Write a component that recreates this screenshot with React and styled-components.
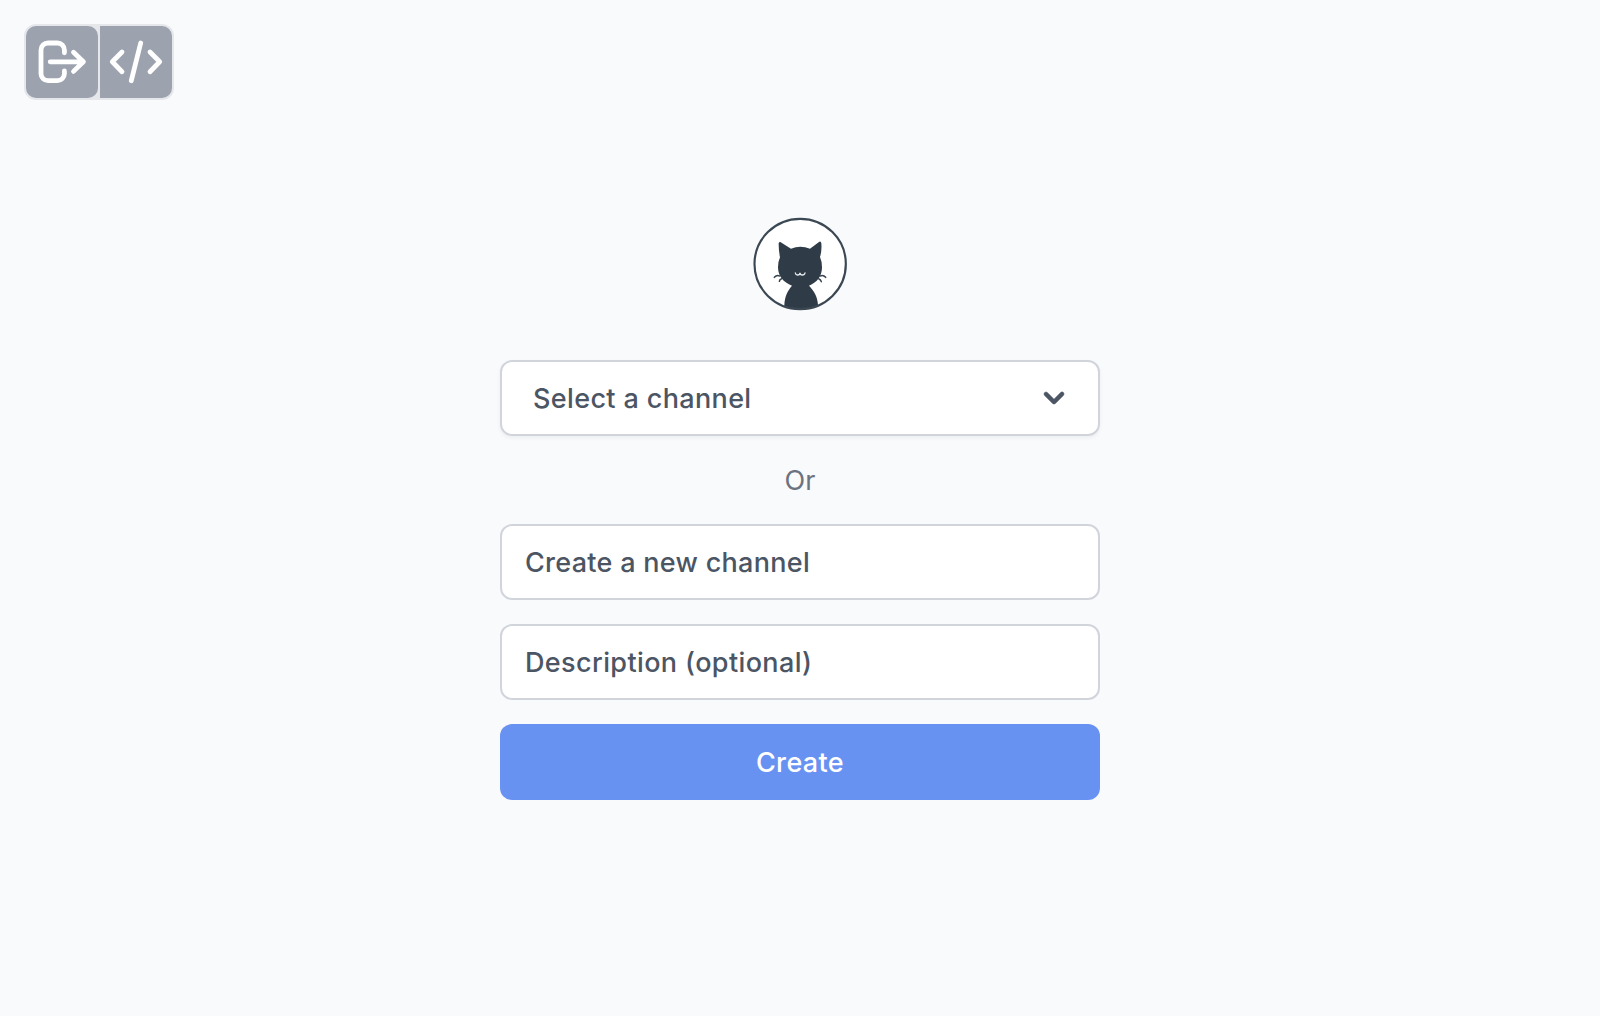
import React from "react";
import styled, { createGlobalStyle } from "styled-components";

const GlobalStyle = createGlobalStyle`
  *, *::before, *::after { box-sizing: border-box; }
  body { margin: 0; background: #f9fafc; font-family: Inter, "Liberation Sans", sans-serif; }
  button, input { font: inherit; letter-spacing: inherit; margin: 0; }
`;

const Page = styled.div`
  display: grid;
  grid-template-rows: 1fr auto 1fr;
  height: 100vh;
  overflow: hidden;
`;

const Toolbar = styled.nav`
  display: flex;
  align-self: start;
  justify-self: start;
  margin: 24px;
  border: 2px solid #e5e7eb;
  border-radius: 12px;
  background: #e5e7eb;
  gap: 2px;
`;

const ToolButton = styled.button`
  display: flex;
  width: 72px;
  height: 72px;
  padding: 0;
  border: 0;
  border-radius: ${(p) => p.$radius};
  background: #9ca3af;
  color: #fff;
`;

const ToolIcon = styled.svg`
  width: 72px;
  height: 72px;
  fill: none;
  stroke: currentColor;
  stroke-width: 4.8;
  stroke-linecap: round;
  stroke-linejoin: round;
`;

const Form = styled.form`
  grid-row: 2;
  justify-self: center;
  display: flex;
  flex-direction: column;
  gap: 24px;
  width: 600px;
  font-size: 27px;
  line-height: 40px;
`;

const Logo = styled.svg`
  align-self: center;
  width: 96px;
  height: 96px;
  margin-bottom: 24px;
`;

const Select = styled.button`
  display: flex;
  align-items: center;
  justify-content: space-between;
  height: 76px;
  padding: 0 24px 0 31px;
  border: 2px solid #d1d5db;
  border-radius: 12px;
  background: #fff;
  box-shadow: 0 2px 4px rgba(0, 0, 0, 0.05);
  color: #4b5563;
  font-weight: 500;
`;

const Label = styled.span`
  padding-top: 1px;
  letter-spacing: ${(p) => p.$spacing};
`;

const Chevron = styled.svg`
  width: 40px;
  height: 40px;
  fill: currentColor;
  stroke: currentColor;
  stroke-width: 0.25;
`;

const Divider = styled.div`
  height: 40px;
  padding-top: 1px;
  color: #6b7280;
  text-align: center;
  letter-spacing: 0.2px;
`;

const Field = styled.input`
  width: 100%;
  height: 76px;
  padding: 1px 24px 0 23px;
  border: 2px solid #d1d5db;
  border-radius: 12px;
  background: #fff;
  color: #4b5563;
  font-weight: 500;
  letter-spacing: ${(p) => p.$spacing};
  outline: none;

  &::placeholder {
    color: #4b5563;
    opacity: 1;
  }
`;

const Submit = styled.button`
  height: 76px;
  padding: 1px 0 0;
  border: 0;
  border-radius: 12px;
  background: #6892f2;
  color: #fff;
  font-weight: 500;
`;

export default function App() {
  return (
    <Page>
      <GlobalStyle />
      <Toolbar>
        <ToolButton $radius="10px" aria-label="Log out">
          <ToolIcon viewBox="26 26 72 72">
            <path d="M64.4 52.8V50a7 7 0 0 0-7-7H48a7 7 0 0 0-7 7v23.7a7 7 0 0 0 7 7h9.4a7 7 0 0 0 7-7V71M50.2 61.8h33.2M73.5 52.2l9.9 9.6-9.9 9.6" />
          </ToolIcon>
        </ToolButton>
        <ToolButton $radius="0 10px 10px 0" aria-label="Code">
          <ToolIcon viewBox="100 26 72 72">
            <path d="M122 52l-9.7 9.8 9.7 9.9M140.7 43l-9.4 37.7M150 52l9.7 9.8-9.7 9.9" />
          </ToolIcon>
        </ToolButton>
      </Toolbar>
      <Form onSubmit={(e) => e.preventDefault()}>
        <Logo viewBox="36 33 288 288" aria-label="Cat logo">
          <defs>
            <clipPath id="badge">
              <ellipse cx="180.5" cy="177" rx="139" ry="137.5" />
            </clipPath>
          </defs>
          <ellipse cx="180.5" cy="177" rx="137" ry="135.5" fill="#fff" />
          <g clipPath="url(#badge)" fill="#2f3c47">
            <path d="M121 111Q115 110 116 118Q116 138 120 157Q114 170 114 187C114 212 130 233 156 242C144 255 134 274 133 300V320H234V300C233 274 220 255 207 242C232 233 246 212 246 187Q246 169 240 156Q246 138 244 115Q242 106 236 112L210 131Q181 119 153 131Z" />
          </g>
          <g fill="none" stroke="#36434e" strokeWidth="4.5" strokeLinecap="round">
            <path d="M119 213Q110 209 103 217M125 221Q119 222 118 229M241 213Q250 209 257 217M236 221Q242 223 244 230" />
          </g>
          <path d="M166 204Q167 210 173 210Q180 210 180 203Q180 210 187 210Q194 210 195 204" fill="none" stroke="#e5e9ec" strokeWidth="4" strokeLinecap="round" />
          <ellipse cx="180.5" cy="177" rx="137" ry="135.5" fill="none" stroke="#3b4853" strokeWidth="6.5" />
        </Logo>
        <Select type="button">
          <Label $spacing="0.36px">Select a channel</Label>
          <Chevron viewBox="0 0 20 20">
            <path d="M5.293 7.293a1 1 0 011.414 0L10 10.586l3.293-3.293a1 1 0 111.414 1.414l-4 4a1 1 0 01-1.414 0l-4-4a1 1 0 010-1.414z" />
          </Chevron>
        </Select>
        <Divider>Or</Divider>
        <Field placeholder="Create a new channel" $spacing="0.29px" />
        <Field placeholder="Description (optional)" $spacing="0.38px" />
        <Submit type="submit">
          <Label $spacing="0.35px">Create</Label>
        </Submit>
      </Form>
    </Page>
  );
}
